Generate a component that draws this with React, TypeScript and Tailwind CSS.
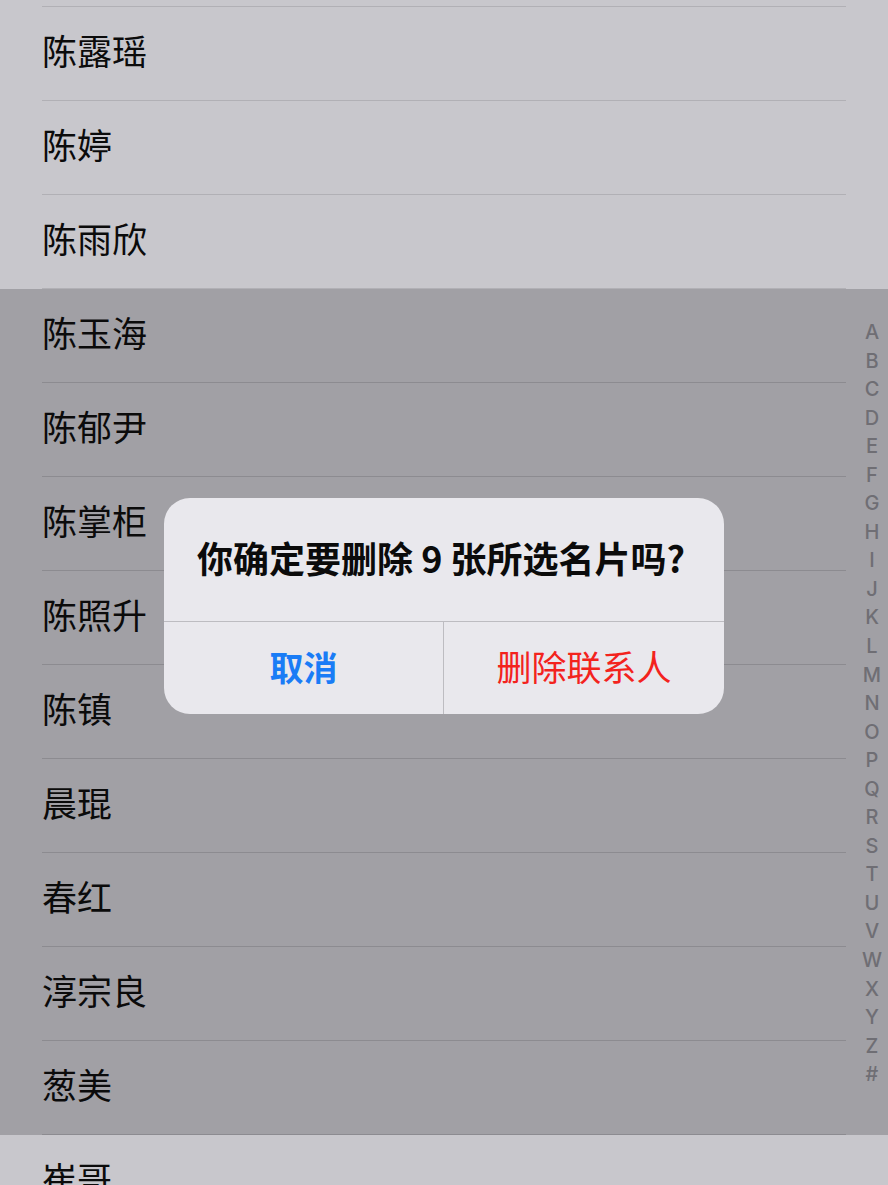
import React from 'react'

const names = [
  { name: '陈露瑶', selected: false },
  { name: '陈婷', selected: false },
  { name: '陈雨欣', selected: false },
  { name: '陈玉海', selected: true },
  { name: '陈郁尹', selected: true },
  { name: '陈掌柜', selected: true },
  { name: '陈照升', selected: true },
  { name: '陈镇', selected: true },
  { name: '晨琨', selected: true },
  { name: '春红', selected: true },
  { name: '淳宗良', selected: true },
  { name: '葱美', selected: true },
  { name: '崔哥', selected: false },
]

const letters = 'ABCDEFGHIJKLMNOPQRSTUVWXYZ#'.split('')

const cjk = { fontFamily: '"Noto Sans CJK SC", "Noto Sans", sans-serif' }

function Row({ name, selected }: { name: string; selected: boolean }) {
  return (
    <div className={selected ? 'bg-[#a1a0a5]' : 'bg-[#c8c7cc]'}>
      <div
        className={
          'mx-[42px] flex h-[94px] items-center border-b ' +
          (selected ? 'border-[#8c8b90]' : 'border-[#b1b0b5]')
        }
      >
        <span className="pb-[9px] text-[35px] leading-none text-[#0b0b0b]">{name}</span>
      </div>
    </div>
  )
}

export default function App() {
  return (
    <div className="relative h-[1185px] w-[888px] overflow-hidden bg-[#c8c7cc]" style={cjk}>
      {/* list */}
      <div className="flex flex-col">
        <div className="mx-[42px] h-[7px] border-b border-[#b1b0b5]" />
        {names.map((n) => (
          <Row key={n.name} name={n.name} selected={n.selected} />
        ))}
      </div>

      {/* section index */}
      <div
        className="absolute right-0 top-[318px] flex w-[32px] flex-col items-center text-[20px] font-medium text-[#6f6e74]"
        style={{ fontFamily: 'Inter, "Noto Sans", sans-serif' }}
      >
        {letters.map((l) => (
          <div key={l} className="h-[28.55px] leading-[28.55px]">
            {l}
          </div>
        ))}
      </div>

      {/* alert */}
      <div className="absolute left-[164px] top-[498px] w-[560px] overflow-hidden rounded-[26px] bg-[#e9e8ed]">
        <div className="flex h-[124px] items-center justify-center border-b border-[#bdbcc1]">
          <p className="pb-[6px] pr-[6px] text-[36px] font-semibold leading-none text-[#0b0b0b]">
            你确定要删除 9 张所选名片吗?
          </p>
        </div>
        <div className="grid h-[92px] grid-cols-2">
          <button className="flex items-center justify-center border-r border-[#bdbcc1] pb-[4px] text-[34px] font-semibold text-[#1a7cf6]">
            取消
          </button>
          <button className="flex items-center justify-center pb-[4px] text-[35px] text-[#f3231d]">
            删除联系人
          </button>
        </div>
      </div>
    </div>
  )
}
